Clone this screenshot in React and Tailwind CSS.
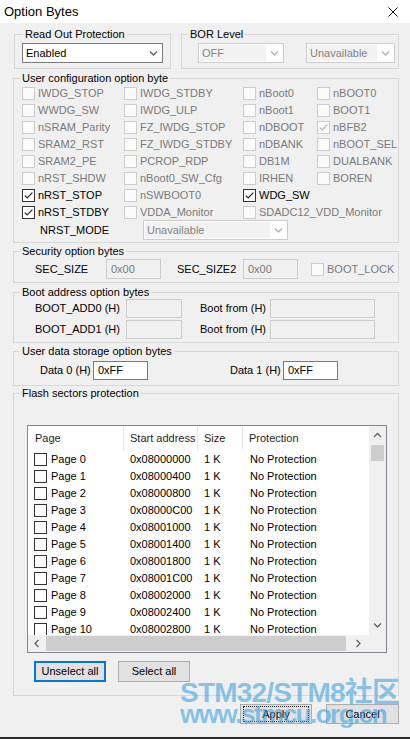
import React from "react";

const pages = Array.from({ length: 11 }, (_, i) => ({
  name: `Page ${i}`,
  addr: "0x" + (0x08000000 + i * 0x400).toString(16).toUpperCase().padStart(8, "0"),
}));

const off = (label) => ({ label, disabled: true });
const on = (label) => ({ label, checked: true });

const userRows = [
  [off("IWDG_STOP"), off("IWDG_STDBY"), off("nBoot0"), off("nBOOT0")],
  [off("WWDG_SW"), off("IWDG_ULP"), off("nBoot1"), off("BOOT1")],
  [off("nSRAM_Parity"), off("FZ_IWDG_STOP"), off("nDBOOT"), { label: "nBFB2", disabled: true, checked: true }],
  [off("SRAM2_RST"), off("FZ_IWDG_STDBY"), off("nDBANK"), off("nBOOT_SEL")],
  [off("SRAM2_PE"), off("PCROP_RDP"), off("DB1M"), off("DUALBANK")],
  [off("nRST_SHDW"), off("nBoot0_SW_Cfg"), off("IRHEN"), off("BOREN")],
  [on("nRST_STOP"), off("nSWBOOT0"), on("WDG_SW"), null],
  [on("nRST_STDBY"), off("VDDA_Monitor"), off("SDADC12_VDD_Monitor"), null],
];

function Chevron({ dir = "down", color = "#606060", className = "" }) {
  const d = {
    down: "M1 1.5 L4.5 5 L8 1.5",
    up: "M1 5 L4.5 1.5 L8 5",
    left: "M5.5 1 L2 4.5 L5.5 8",
    right: "M2.5 1 L6 4.5 L2.5 8",
  }[dir];
  const vert = dir === "up" || dir === "down";
  return (
    <svg
      viewBox={vert ? "0 0 9 7" : "0 0 8 9"}
      className={`${vert ? "h-[7px] w-[9px]" : "h-[9px] w-[8px]"} ${className}`}
    >
      <path d={d} fill="none" stroke={color} strokeWidth="1.3" />
    </svg>
  );
}

function Box({ checked, disabled }) {
  return (
    <span
      className={`flex h-[13px] w-[13px] shrink-0 items-center justify-center border ${
        disabled ? "border-[#cccccc] bg-[#fbfbfb]" : "border-[#333333] bg-white"
      }`}
    >
      {checked ? (
        <svg viewBox="0 0 11 11" className="h-[11px] w-[11px]">
          <path
            d="M1.8 5.6 L4.2 8 L9.4 2.6"
            fill="none"
            stroke={disabled ? "#b5b5b5" : "#222222"}
            strokeWidth="1.2"
          />
        </svg>
      ) : null}
    </span>
  );
}

function Check({ label, checked, disabled }) {
  return (
    <div className="flex h-[17px] items-center gap-[3px] whitespace-nowrap">
      <Box checked={checked} disabled={disabled} />
      <span className={disabled ? "text-[#7a7a7a]" : "text-black"}>{label}</span>
    </div>
  );
}

function Combo({ value, disabled, className = "" }) {
  return (
    <div
      className={`flex h-[20px] items-center border bg-white ${
        disabled ? "border-[#cccccc]" : "border-[#7a7a7a]"
      } ${className}`}
    >
      <div
        className={`ml-[1px] flex h-[16px] flex-1 items-center pl-[2px] ${
          disabled ? "bg-[#f2f2f2] text-[#838383]" : "text-black"
        }`}
      >
        {value}
      </div>
      <div className="flex w-[17px] justify-center">
        <Chevron color={disabled ? "#b0b0b0" : "#606060"} />
      </div>
    </div>
  );
}

function Field({ value = "", disabled, className = "" }) {
  return (
    <div
      className={`flex items-center border pl-[4px] ${
        disabled ? "border-[#cccccc] bg-[#f0f0f0] text-[#7a7a7a]" : "border-[#7a7a7a] bg-white text-black"
      } ${className}`}
    >
      {value}
    </div>
  );
}

function Group({ title, className = "", children, legendClass = "ml-[6px]" }) {
  return (
    <fieldset className={`border border-[#d8d8d8] ${className}`}>
      <legend className={`${legendClass} px-[2px] leading-[14px]`}>{title}</legend>
      {children}
    </fieldset>
  );
}

function Button({ children, focus, dotted, className = "" }) {
  return (
    <div
      className={`flex items-center justify-center bg-[#e1e1e1] ${
        focus ? "border-2 border-[#0078d7]" : "border border-[#adadad]"
      } ${className}`}
    >
      {dotted ? (
        <span className="flex h-[16px] w-[66px] items-center justify-center border border-dotted border-[#222222]">
          {children}
        </span>
      ) : (
        children
      )}
    </div>
  );
}

function SectorList() {
  return (
    <div className="ml-[13px] flex h-[228px] w-[360px] flex-col border border-[#828790] bg-white">
      <div className="flex min-h-0 flex-1">
        <div className="flex-1 overflow-hidden">
          <div className="flex h-[25px] items-center text-[#1e1e1e]">
            <div className="flex h-full w-[96px] items-center border-r border-[#e5e5e5] pl-[7px]">Page</div>
            <div className="flex h-full w-[74px] items-center border-r border-[#e5e5e5] pl-[6px]">Start address</div>
            <div className="flex h-full w-[45px] items-center border-r border-[#e5e5e5] pl-[6px]">Size</div>
            <div className="flex h-full items-center pl-[6px]">Protection</div>
          </div>
          {pages.map((p) => (
            <div key={p.name} className="flex h-[17px] items-center whitespace-nowrap">
              <div className="flex w-[96px] items-center gap-[4px] pl-[6px]">
                <Box />
                <span>{p.name}</span>
              </div>
              <div className="w-[74px] pl-[6px]">{p.addr}</div>
              <div className="w-[46px] pl-[6px]">1 K</div>
              <div className="pl-[6px]">No Protection</div>
            </div>
          ))}
        </div>
        <div className="flex w-[17px] flex-col bg-[#f0f0f0]">
          <div className="flex h-[19px] items-center justify-center">
            <Chevron dir="up" />
          </div>
          <div className="mx-[2px] h-[16px] bg-[#cdcdcd]" />
          <div className="flex-1" />
          <div className="flex h-[19px] items-center justify-center">
            <Chevron dir="down" />
          </div>
        </div>
      </div>
      <div className="flex h-[17px] bg-[#f0f0f0]">
        <div className="flex flex-1 items-center">
          <div className="flex w-[18px] justify-center">
            <Chevron dir="left" />
          </div>
          <div className="h-[15px] w-[300px] bg-[#cdcdcd]" />
          <div className="flex flex-1 justify-center">
            <Chevron dir="right" />
          </div>
        </div>
        <div className="w-[17px]" />
      </div>
    </div>
  );
}

export default function App() {
  return (
    <div className="relative flex h-[739px] w-[410px] flex-col overflow-hidden bg-[#f0f0f0] font-['Liberation_Sans',Arial,sans-serif] text-[11px] text-black">
      {/* title bar */}
      <div className="flex h-[23px] shrink-0 items-center justify-between bg-white pl-[4px] pr-[12px]">
        <span className="text-[13px]">Option Bytes</span>
        <svg viewBox="0 0 10 10" className="h-[10px] w-[10px]">
          <path d="M0.5 0.5 L9.5 9.5 M9.5 0.5 L0.5 9.5" stroke="#111111" strokeWidth="1" />
        </svg>
      </div>

      <div className="flex flex-col pl-[13px] pr-[11px] pt-[4px]">
        <div className="flex">
          <Group title="Read Out Protection" className="ml-[1px] w-[157px]" legendClass="ml-[8px]">
            <div className="px-[7px] pb-[5px] pt-[2px]">
              <Combo value="Enabled" className="w-[141px]" />
            </div>
          </Group>
          <Group title="BOR Level" className="ml-[10px] w-[218px]">
            <div className="flex pb-[5px] pl-[16px] pt-[2px]">
              <Combo value="OFF" disabled className="w-[86px]" />
              <Combo value="Unavailable" disabled className="ml-[22px] w-[89px]" />
            </div>
          </Group>
        </div>

        <Group title="User configuration option byte" className="mt-[2px]">
          <div className="pb-[2px] pl-[8px]">
            {userRows.map((row, r) => (
              <div key={r} className="grid grid-cols-[102px_119px_74px_1fr]">
                {row.map((c, i) => (c ? <Check key={i} {...c} /> : <div key={i} />))}
              </div>
            ))}
            <div className="-mt-[1px] flex items-center">
              <span className="w-[121px] pl-[18px]">NRST_MODE</span>
              <Combo value="Unavailable" disabled className="w-[145px]" />
            </div>
          </div>
        </Group>

        <Group title="Security option bytes" className="mt-[1px]">
          <div className="flex items-center pb-[3px] pl-[21px] pt-[1px]">
            <span className="w-[71px]">SEC_SIZE</span>
            <Field value="0x00" disabled className="h-[20px] w-[55px]" />
            <span className="ml-[16px] w-[66px]">SEC_SIZE2</span>
            <Field value="0x00" disabled className="h-[20px] w-[55px]" />
            <div className="ml-[13px]">
              <Check label="BOOT_LOCK" disabled />
            </div>
          </div>
        </Group>

        <Group title="Boot address option bytes" className="mt-[2px]">
          <div className="flex flex-col gap-[2px] pb-[3px] pl-[21px]">
            {["BOOT_ADD0 (H)", "BOOT_ADD1 (H)"].map((l) => (
              <div key={l} className="flex items-center">
                <span className="w-[91px]">{l}</span>
                <Field disabled className="h-[19px] w-[56px]" />
                <span className="ml-[18px] w-[70px]">Boot from (H)</span>
                <Field disabled className="h-[19px] w-[105px]" />
              </div>
            ))}
          </div>
        </Group>

        <Group title="User data storage option bytes" className="mt-[1px]">
          <div className="flex items-center pb-[5px] pl-[26px] pt-[3px]">
            <span className="w-[53px]">Data 0 (H)</span>
            <Field value="0xFF" className="h-[19px] w-[55px]" />
            <span className="ml-[82px] w-[53px]">Data 1 (H)</span>
            <Field value="0xFF" className="h-[19px] w-[55px]" />
          </div>
        </Group>

        <Group title="Flash sectors protection">
          <div className="pb-[13px] pt-[25px]">
            <SectorList />
            <div className="ml-[20px] mt-[8px] flex gap-[12px]">
              <Button focus className="h-[21px] w-[72px]">Unselect all</Button>
              <Button className="h-[21px] w-[72px]">Select all</Button>
            </div>
          </div>
        </Group>

        <div className="mt-[8px] flex justify-end gap-[14px]">
          <Button dotted className="h-[20px] w-[72px]">Apply</Button>
          <Button className="h-[20px] w-[73px]">Cancel</Button>
        </div>
      </div>

      <div className="mt-auto h-[2px] shrink-0 bg-[#2b2b2b]" />

      {/* site watermark */}
      <div className="pointer-events-none absolute left-[180px] top-[679px] font-['Liberation_Sans','Noto_Sans_CJK_SC',sans-serif] font-bold text-[#3ea3df]/60">
        <div className="text-[28px] leading-[28px] tracking-[-0.8px]">STM32/STM8社区</div>
        <div className="-mt-[6px] text-[26px] leading-[26px] tracking-[-1.5px]">www.stmcu.org.cn</div>
      </div>
    </div>
  );
}
